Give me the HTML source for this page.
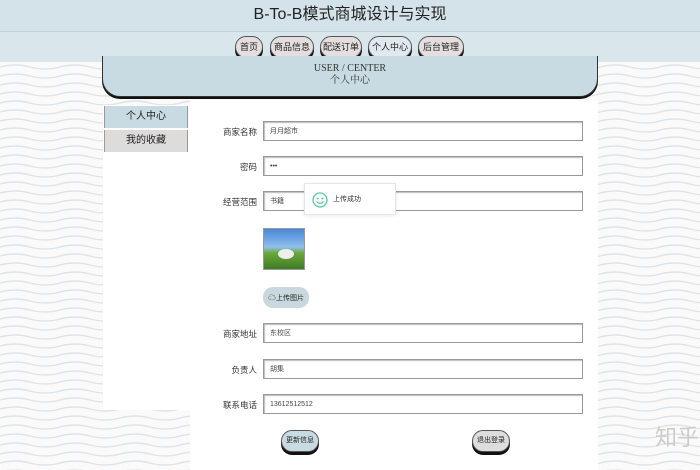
<!DOCTYPE html>
<html><head><meta charset="utf-8"><style>
*{margin:0;padding:0;box-sizing:border-box}
body{width:700px;height:470px;overflow:hidden;position:relative;font-family:"Liberation Sans","Noto Sans CJK SC",sans-serif;background:#f4f5f6}
.bg{position:absolute;inset:0}
.hd{position:absolute;left:0;top:0;width:700px;height:32px;background:#d4e2e9;border-bottom:1px solid #c4d2d9;text-align:center;font-size:16px;line-height:30px;color:#222}
.nav{position:absolute;left:0;top:32px;width:700px;height:30px;background:#d9e6ec}
.nb{position:absolute;top:4px;height:22px;border-radius:11px;background:#e4dede;border:1px solid #555;box-shadow:0 3px 0 #111;font-size:9px;line-height:20px;text-align:center;color:#222}
.ban{position:absolute;left:102px;top:56px;width:496px;height:41px;background:#c9dbe2;border:1px solid #333;border-top:none;border-radius:0 0 18px 18px;box-shadow:0 2px 0 #111;text-align:center;font-family:"Liberation Serif","Noto Serif CJK SC",serif;color:#333;font-size:10px;padding-top:7px;line-height:12px}
.side{position:absolute;left:103px;top:105px;width:87px;height:305px;background:#fff}
.si{position:absolute;left:1px;width:84px;height:22px;font-size:10px;text-align:center;line-height:22px;color:#222;border-left:1px solid #999;border-right:1px solid #999}
.main{position:absolute;left:190px;top:100px;width:408px;height:370px;background:#fff}
.lb{position:absolute;right:443px;font-size:8.5px;color:#333;text-align:right}
.in{position:absolute;left:263px;width:320px;height:20px;border:1px solid #999;box-shadow:inset 1px 1px 1px #bbb;background:#fff;font-size:7px;line-height:20px;padding-left:6px;color:#444}
.bt{position:absolute;height:22px;border-radius:11px;border:1px solid #555;box-shadow:0 3px 0 #111;font-size:7px;line-height:20px;text-align:center;color:#222}
</style></head><body>
<svg class="bg" width="700" height="470"><defs><pattern id="w" width="60" height="9" patternUnits="userSpaceOnUse"><path d="M0 4 Q15 0 30 4 T60 4" fill="none" stroke="#e0e3e6" stroke-width="1.4"/></pattern></defs><rect width="700" height="470" fill="#fafafa"/><rect width="700" height="470" fill="url(#w)"/></svg>
<div class="hd">B-To-B模式商城设计与实现</div>
<div class="nav">
<div class="nb" style="left:235px;width:28px">首页</div>
<div class="nb" style="left:270px;width:44px">商品信息</div>
<div class="nb" style="left:320px;width:42px">配送订单</div>
<div class="nb" style="left:368px;width:44px;background:#dfe9ee">个人中心</div>
<div class="nb" style="left:418px;width:46px">后台管理</div>
</div>
<div class="ban">USER / CENTER<br><span style="font-size:10px">个人中心</span></div>
<div class="side">
<div class="si" style="top:1px;background:#c9dbe2">个人中心</div>
<div class="si" style="top:25px;background:#dedbdb">我的收藏</div>
</div>
<div class="main"></div>
<div class="lb" style="top:126px">商家名称</div><div class="in" style="top:121px">月月超市</div>
<div class="lb" style="top:161px">密码</div><div class="in" style="top:156px">•••</div>
<div class="lb" style="top:196px">经营范围</div><div class="in" style="top:191px">书籍</div>
<div style="position:absolute;left:304px;top:183px;width:92px;height:32px;background:#fff;border:1px solid #e6e6e6;box-shadow:0 1px 4px rgba(0,0,0,.08);font-size:7px;line-height:32px;padding-left:28px;color:#333">上传成功
<svg style="position:absolute;left:7px;top:8px" width="16" height="16"><circle cx="8" cy="8" r="7" fill="none" stroke="#5cc3a0" stroke-width="1.3"/><circle cx="5.5" cy="6.5" r="1" fill="#5cc3a0"/><circle cx="10.5" cy="6.5" r="1" fill="#5cc3a0"/><path d="M4.5 9.5Q8 13 11.5 9.5" fill="none" stroke="#5cc3a0" stroke-width="1.2"/></svg></div>
<div style="position:absolute;left:263px;top:228px;width:42px;height:42px;border:1px solid #999;background:linear-gradient(#4a86d8 0%,#8fc0ee 45%,#6aa838 60%,#3f7a25 100%)"><div style="position:absolute;left:14px;top:20px;width:16px;height:10px;border-radius:50%;background:#eee"></div></div>
<div style="position:absolute;left:263px;top:287px;width:46px;height:21px;border-radius:10px;background:#c9d8df;font-size:7px;line-height:21px;text-align:center;color:#222"><b style="font-size:8px">☁</b>上传图片</div>
<div class="lb" style="top:328px">商家地址</div><div class="in" style="top:323px">东校区</div>
<div class="lb" style="top:364px">负责人</div><div class="in" style="top:359px">胡集</div>
<div class="lb" style="top:399px">联系电话</div><div class="in" style="top:394px">13612512512</div>
<div class="bt" style="left:281px;top:430px;width:38px;background:#c9dbe2">更新信息</div>
<div class="bt" style="left:472px;top:430px;width:38px;background:#ddd">退出登录</div>
<div style="position:absolute;left:655px;top:420px;font-size:22px;color:#ccc">知乎</div>
</body></html>
